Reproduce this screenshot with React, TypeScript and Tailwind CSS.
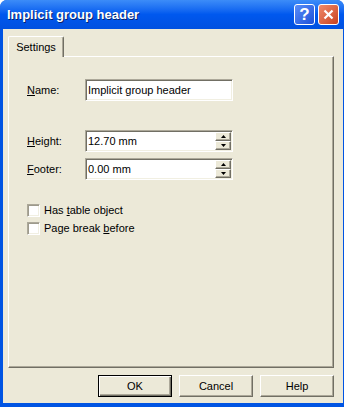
import React from "react";

const font = { fontFamily: '"Liberation Sans", Arial, sans-serif' };

function Field({ label, u, value, spin }: { label: string; u: number; value: string; spin?: boolean }) {
  return (
    <div className="flex items-center h-[22px]">
      <span className="w-[58px] text-[11px] text-black">
        {label.slice(0, u)}
        <span className="underline">{label[u]}</span>
        {label.slice(u + 1)}
      </span>
      <div className="relative w-[148px] h-[22px] bg-white border border-t-[#ACA899] border-l-[#ACA899] border-r-white border-b-white shadow-[inset_1px_1px_0_#716F64,inset_-1px_-1px_0_#F1EFE2] flex items-center pl-[2px] text-[11px]">
        {value}
        {spin && (
          <div className="absolute right-[1px] top-[1px] flex flex-col">
            <SpinBtn up />
            <SpinBtn />
          </div>
        )}
      </div>
    </div>
  );
}

function SpinBtn({ up }: { up?: boolean }) {
  return (
    <div className="w-[16px] h-[9px] bg-[#ECE9D8] border border-t-white border-l-white border-r-[#716F64] border-b-[#716F64] shadow-[inset_-1px_-1px_0_#ACA899] flex items-center justify-center">
      <svg width="5" height="3" viewBox="0 0 5 3">
        {up ? <path d="M2.5 0L5 3H0z" fill="#000" /> : <path d="M0 0H5L2.5 3z" fill="#000" />}
      </svg>
    </div>
  );
}

function Check({ label, u }: { label: string; u: number }) {
  return (
    <div className="flex items-center h-[13px]">
      <div className="w-[13px] h-[13px] bg-white border border-t-[#ACA899] border-l-[#ACA899] border-r-white border-b-white shadow-[inset_1px_1px_0_#9D9A8C,inset_-1px_-1px_0_#F1EFE2]" />
      <span className="ml-[4px] text-[11px]">
        {label.slice(0, u)}
        <span className="underline">{label[u]}</span>
        {label.slice(u + 1)}
      </span>
    </div>
  );
}

function Btn({ label, def }: { label: string; def?: boolean }) {
  return (
    <div
      className={`w-[74px] h-[22px] flex items-center justify-center text-[11px] bg-[#ECE9D8] border ${
        def ? "border-black" : "border-t-white border-l-white border-r-[#716F64] border-b-[#716F64]"
      } ${def ? "shadow-[inset_1px_1px_0_#fff,inset_-1px_-1px_0_#716F64,inset_-2px_-2px_0_#ACA899]" : "shadow-[inset_-1px_-1px_0_#ACA899]"}`}
    >
      {label}
    </div>
  );
}

export default function App() {
  return (
    <div className="w-[344px] h-[407px] bg-[#0054E3] rounded-t-[7px] flex flex-col overflow-hidden" style={font}>
      <div className="h-[29px] shrink-0 flex items-center px-[7px] bg-gradient-to-b from-[#3C8CF8] via-[#0058EE] to-[#0050E0]">
        <span className="text-white font-bold text-[13px] [text-shadow:1px_1px_0_#0A246A]">Implicit group header</span>
        <div className="ml-auto flex gap-[3px] mr-[-2px]">
          <div className="w-[21px] h-[21px] rounded-[3px] border border-white bg-gradient-to-br from-[#5A8DF8] to-[#1E4FD8] flex items-center justify-center text-white font-bold text-[17px] leading-none">
            ?
          </div>
          <div className="w-[21px] h-[21px] rounded-[3px] border border-white bg-gradient-to-br from-[#F08A6A] to-[#C8401C] flex items-center justify-center">
            <svg width="11" height="11" viewBox="0 0 11 11">
              <path d="M1.5 1.5L9.5 9.5M9.5 1.5L1.5 9.5" stroke="#fff" strokeWidth="2.2" />
            </svg>
          </div>
        </div>
      </div>
      <div className="flex-1 ml-[3px] mr-[1px] mb-[4px] bg-[#ECE9D8] flex flex-col pt-[7px] pl-[5px] pr-[9px]">
        <div className="flex">
          <div className="relative z-10 w-[56px] h-[21px] mb-[-1px] bg-[#ECE9D8] border-l border-t border-r border-l-white border-t-white border-r-[#716F64] shadow-[inset_-1px_0_0_#ACA899] rounded-t-[2px] flex items-center justify-center text-[11px]">
            Settings
          </div>
        </div>
        <div className="h-[312px] border border-t-white border-l-white border-r-[#716F64] border-b-[#716F64] shadow-[inset_-1px_-1px_0_#ACA899] flex flex-col pl-[18px] pt-[22px]">
          <Field label="Name:" u={0} value="Implicit group header" />
          <div className="mt-[29px]">
            <Field label="Height:" u={0} value="12.70 mm" spin />
          </div>
          <div className="mt-[6px]">
            <Field label="Footer:" u={0} value="0.00 mm" spin />
          </div>
          <div className="mt-[24px] flex flex-col gap-[5px]">
            <Check label="Has table object" u={4} />
            <Check label="Page break before" u={11} />
          </div>
        </div>
        <div className="flex justify-end gap-[7px] mt-[7px]">
          <Btn label="OK" def />
          <Btn label="Cancel" />
          <Btn label="Help" />
        </div>
      </div>
    </div>
  );
}
